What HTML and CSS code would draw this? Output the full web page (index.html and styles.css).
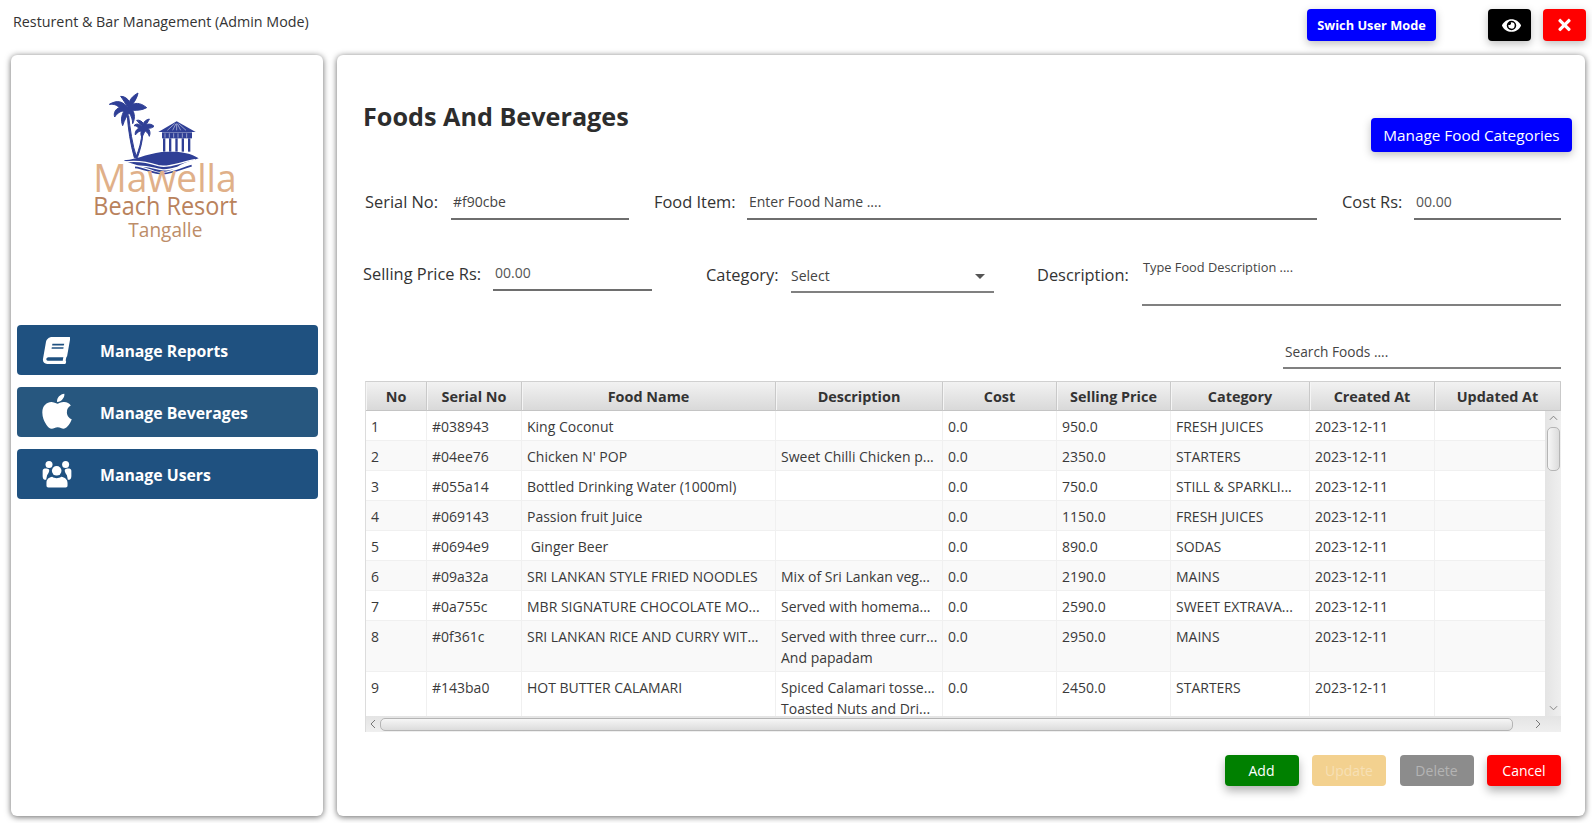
FILE: index.html
```html
<!DOCTYPE html>
<html lang="en">
<head>
  <meta charset="UTF-8" />
  <meta name="viewport" content="width=device-width, initial-scale=1.0" />
  <title>Resturent &amp; Bar Management (Admin Mode)</title>
  <link rel="stylesheet" href="styles.css">
</head>
<body>
  <div class="topbar">
    <div class="app-title">Resturent &amp; Bar Management (Admin Mode)</div>
    <button class="btn btn-mode">Swich User Mode</button>
    <button class="btn btn-icon btn-black">
      <svg class="eye" viewBox="0 0 576 512"><path d="M572.52 241.4C518.29 135.59 410.93 64 288 64S57.68 135.64 3.48 241.41a32.35 32.35 0 0 0 0 29.19C57.71 376.41 165.07 448 288 448s230.32-71.64 284.52-177.41a32.35 32.35 0 0 0 0-29.19zM288 400a144 144 0 1 1 144-144 143.93 143.93 0 0 1-144 144zm0-240a95.31 95.31 0 0 0-25.31 3.79 47.85 47.85 0 0 1-66.9 66.9A95.78 95.78 0 1 0 288 160z"/></svg>
    </button>
    <button class="btn btn-icon btn-red">
      <svg class="cross" viewBox="0 0 352 512"><path d="M242.72 256l100.07-100.07c12.28-12.28 12.28-32.19 0-44.48l-22.24-22.24c-12.28-12.28-32.19-12.28-44.48 0L176 189.28 75.93 89.21c-12.28-12.28-32.19-12.28-44.48 0L9.21 111.45c-12.28 12.28-12.28 32.19 0 44.48L109.28 256 9.21 356.07c-12.28 12.28-12.28 32.19 0 44.48l22.24 22.24c12.28 12.28 32.2 12.28 44.48 0L176 322.72l100.07 100.07c12.28 12.28 32.2 12.28 44.48 0l22.24-22.24c12.28-12.28 12.28-32.19 0-44.48L242.72 256z"/></svg>
    </button>
  </div>

  <div class="main">
    <div class="panel sidebar">
      <svg class="logo" viewBox="0 0 510 480">
        <g class="palms">
          <!-- big palm -->
          <path d="M146 92 C150 130 157 180 170 218 L163 218 C152 180 144 130 142 92 Z"/>
          <path d="M145 70 C128 48 112 44 88 58 C104 56 112 62 118 68 C106 72 100 84 104 96 C112 84 122 78 132 78 C124 92 122 106 128 122 C134 104 140 92 148 84 C154 94 158 104 158 116 C166 100 164 86 158 76 C172 76 186 76 200 68 C186 56 170 52 158 58 C166 46 172 36 174 24 C160 32 152 40 148 50 C142 40 134 34 122 34 C130 44 136 56 145 70 Z"/>
          <!-- small palm -->
          <path d="M189 140 C188 170 180 196 172 218 L168 216 C177 194 185 168 186 140 Z"/>
          <path d="M188 128 C178 116 170 114 162 122 C170 122 174 126 176 130 C168 134 164 142 166 150 C172 142 178 138 184 138 C182 146 182 150 186 156 C190 148 192 144 196 138 C202 142 206 148 208 154 C212 144 210 136 204 130 C212 130 218 128 222 124 C214 116 204 116 198 120 C202 112 206 108 208 102 C198 104 192 110 190 116 C186 108 178 104 170 106 C176 112 182 120 188 128 Z"/>
        </g>
        <g fill="#2f3f96">
          <!-- hut -->
          <path d="M290 109 L347 141 L235 141 Z"/>
          <rect x="246" y="142" width="90" height="18"/>
          <rect x="249" y="160" width="7" height="40"/>
          <rect x="267" y="160" width="7" height="40"/>
          <rect x="286" y="160" width="7" height="40"/>
          <rect x="305" y="160" width="7" height="40"/>
          <rect x="324" y="160" width="7" height="40"/>
          <!-- island and water -->
          <path d="M131 226 C180 222 215 198 270 200 C305 200 335 205 356 220 C340 226 320 230 300 240 C280 256 250 266 225 258 C195 246 160 240 131 226 Z"/>
        </g>
        <g fill="none" stroke="#fff" stroke-width="4">
          <path d="M135 231 C170 226 205 232 235 242 C265 250 300 232 345 224"/>
          <path d="M170 244 C195 240 220 250 245 254 C270 258 295 244 325 240"/>
          <path d="M255 145 V158 M268 145 V158 M281 145 V158 M294 145 V158 M307 145 V158 M320 145 V158" stroke-width="1.5"/>
          <path d="M262 136 L284 116 M278 136 L288 116 M290 136 V116 M302 136 L292 116 M318 136 L296 116" stroke-width="1.5"/>
        </g>
        <path class="wave" d="M165 247 C195 250 222 268 250 266 C280 264 300 252 335 242"/>
        <text class="logo-a" x="40" y="321" textLength="430" lengthAdjust="spacingAndGlyphs">Mawella</text>
        <text class="logo-b" x="40" y="390" textLength="432" lengthAdjust="spacingAndGlyphs">Beach Resort</text>
        <text class="logo-c" x="145" y="456" textLength="222" lengthAdjust="spacingAndGlyphs">Tangalle</text>
      </svg>

      <div class="nav">
        <a class="nav-item">
          <span class="nav-icon">
            <svg class="ic-book" viewBox="-40 0 530 512"><path transform="skewX(-10) translate(80 0)" d="M448 360V24c0-13.3-10.7-24-24-24H96C43 0 0 43 0 96v320c0 53 43 96 96 96h328c13.3 0 24-10.7 24-24v-16c0-7.5-3.5-14.3-8.9-18.7-4.2-15.4-4.2-59.3 0-74.7 5.4-4.3 8.9-11.1 8.9-18.6zM128 134c0-3.3 2.7-6 6-6h212c3.3 0 6 2.7 6 6v20c0 3.3-2.7 6-6 6H134c-3.3 0-6-2.7-6-6v-20zm0 64c0-3.3 2.7-6 6-6h212c3.3 0 6 2.7 6 6v20c0 3.3-2.7 6-6 6H134c-3.3 0-6-2.7-6-6v-20zm253.4 250H96c-17.7 0-32-14.3-32-32 0-17.6 14.4-32 32-32h285.4c-1.9 17.1-1.9 46.9 0 64z"/></svg>
          </span>
          <span>Manage Reports</span>
        </a>
        <a class="nav-item nav-hover">
          <span class="nav-icon">
            <svg class="ic-apple" viewBox="0 24 384 460" preserveAspectRatio="none"><path d="M318.7 268.7c-.2-36.7 16.4-64.4 50-84.8-18.8-26.9-47.2-41.7-84.7-44.6-35.5-2.8-74.3 20.7-88.5 20.7-15 0-49.4-19.7-76.4-19.7C63.3 141.2 4 184.8 4 273.5q0 39.3 14.4 81.2c12.8 36.7 59 126.7 107.2 125.2 25.2-.6 43-17.9 75.8-17.9 31.8 0 48.3 17.9 76.4 17.9 48.6-.7 90.4-82.5 102.6-119.3-65.2-30.7-61.7-90-61.7-91.9zm-56.6-164.2c27.3-32.4 24.8-61.9 24-72.5-24.1 1.4-52 16.4-67.9 34.9-17.5 19.8-27.8 44.3-25.6 71.9 26.1 2 49.9-11.4 69.5-34.3z"/></svg>
          </span>
          <span>Manage Beverages</span>
        </a>
        <a class="nav-item">
          <span class="nav-icon">
            <svg class="ic-users" viewBox="124 448 94 88">
              <circle cx="146" cy="462" r="11"/>
              <circle cx="198" cy="462" r="11"/>
              <path d="M126 482 C126 475 135 474 143 476 C150 478 146 486 140 496 L137 510 L132 510 C128 508 126 504 126 498 Z"/>
              <path d="M216 482 C216 475 207 474 199 476 C192 478 196 486 202 496 L205 510 L210 510 C214 508 216 504 216 498 Z"/>
              <circle cx="170" cy="482" r="15"/>
              <path d="M138 520 C138 508 146 503 156 501 C164 507 176 507 184 501 C196 503 204 510 204 520 L204 528 C204 532 202 534 198 534 L144 534 C140 534 138 532 138 528 Z"/>
            </svg>
          </span>
          <span>Manage Users</span>
        </a>
      </div>
    </div>

    <div class="panel content">
      <div class="head">
        <h1>Foods And Beverages</h1>
        <button class="btn btn-cats">Manage Food Categories</button>
      </div>

      <div class="form-row row-one">
        <label class="lbl">Serial No:</label>
        <div class="field">#f90cbe</div>
        <span></span>
        <label class="lbl">Food Item:</label>
        <div class="field">Enter Food Name ....</div>
        <span></span>
        <label class="lbl">Cost Rs:</label>
        <div class="field hint">00.00</div>
      </div>

      <div class="form-row row-two">
        <label class="lbl lbl-price">Selling Price Rs:</label>
        <div class="field field-price hint">00.00</div>
        <span></span>
        <label class="lbl lbl-low">Category:</label>
        <div class="field field-select">Select<i class="caret"></i></div>
        <span></span>
        <label class="lbl lbl-low">Description:</label>
        <div class="field field-area">Type Food Description ....</div>
      </div>

      <div class="search-row">
        <div class="field field-search">Search Foods ....</div>
      </div>

      <div class="table-wrap">
        <table class="foods">
          <colgroup>
            <col class="c-no"><col class="c-serial"><col class="c-name"><col class="c-desc"><col class="c-cost">
            <col class="c-sell"><col class="c-cat"><col class="c-made"><col class="c-upd">
          </colgroup>
          <thead>
            <tr><th>No</th><th>Serial No</th><th>Food Name</th><th>Description</th><th>Cost</th><th>Selling Price</th><th>Category</th><th>Created At</th><th>Updated At</th></tr>
          </thead>
          <tbody>
            <tr><td>1</td><td>#038943</td><td>King Coconut</td><td></td><td>0.0</td><td>950.0</td><td>FRESH JUICES</td><td>2023-12-11</td><td></td></tr>
            <tr><td>2</td><td>#04ee76</td><td>Chicken N' POP</td><td>Sweet Chilli Chicken p...</td><td>0.0</td><td>2350.0</td><td>STARTERS</td><td>2023-12-11</td><td></td></tr>
            <tr><td>3</td><td>#055a14</td><td>Bottled Drinking Water (1000ml)</td><td></td><td>0.0</td><td>750.0</td><td>STILL &amp; SPARKLI...</td><td>2023-12-11</td><td></td></tr>
            <tr><td>4</td><td>#069143</td><td>Passion fruit Juice</td><td></td><td>0.0</td><td>1150.0</td><td>FRESH JUICES</td><td>2023-12-11</td><td></td></tr>
            <tr><td>5</td><td>#0694e9</td><td>&nbsp;Ginger Beer</td><td></td><td>0.0</td><td>890.0</td><td>SODAS</td><td>2023-12-11</td><td></td></tr>
            <tr><td>6</td><td>#09a32a</td><td>SRI LANKAN STYLE FRIED NOODLES</td><td>Mix of Sri Lankan veg...</td><td>0.0</td><td>2190.0</td><td>MAINS</td><td>2023-12-11</td><td></td></tr>
            <tr><td>7</td><td>#0a755c</td><td>MBR SIGNATURE CHOCOLATE MO...</td><td>Served with homema...</td><td>0.0</td><td>2590.0</td><td>SWEET EXTRAVA...</td><td>2023-12-11</td><td></td></tr>
            <tr class="tall"><td>8</td><td>#0f361c</td><td>SRI LANKAN RICE AND CURRY WIT...</td><td>Served with three curr...<br>And papadam</td><td>0.0</td><td>2950.0</td><td>MAINS</td><td>2023-12-11</td><td></td></tr>
            <tr class="tall"><td>9</td><td>#143ba0</td><td>HOT BUTTER CALAMARI</td><td>Spiced Calamari tosse...<br>Toasted Nuts and Dri...</td><td>0.0</td><td>2450.0</td><td>STARTERS</td><td>2023-12-11</td><td></td></tr>
          </tbody>
        </table>

        <div class="vbar">
          <svg class="arrow" viewBox="0 0 10 6"><path d="M1 5 L5 1 L9 5"/></svg>
          <div class="vthumb"></div>
          <svg class="arrow arrow-end" viewBox="0 0 10 6"><path d="M1 1 L5 5 L9 1"/></svg>
        </div>
        <div class="hbar">
          <svg class="arrow-h" viewBox="0 0 6 10"><path d="M5 1 L1 5 L5 9"/></svg>
          <div class="hthumb"></div>
          <svg class="arrow-h" viewBox="0 0 6 10"><path d="M1 1 L5 5 L1 9"/></svg>
        </div>
      </div>

      <div class="actions">
        <button class="btn act btn-add">Add</button>
        <button class="btn act btn-update">Update</button>
        <button class="btn act btn-delete">Delete</button>
        <button class="btn act btn-cancel">Cancel</button>
      </div>
    </div>
  </div>
</body>
</html>
```

FILE: styles.css
```css
* {
  box-sizing: border-box;
}
body {
  margin: 0;
  height: 823px;
  overflow: hidden;
  background: #fff;
  color: #333;
  font-family: "Open Sans", "Noto Sans", sans-serif;
}

/* top bar */
.topbar {
  height: 55px;
  display: flex;
  align-items: flex-start;
  padding: 9px 6px 0 13px;
}
.app-title {
  flex: 1;
  font-size: 14.3px;
  line-height: 25px;
}
.btn {
  border: none;
  border-radius: 4px;
  color: #fff;
  font-family: inherit;
  cursor: pointer;
  padding: 0;
  box-shadow: 0 3px 8px rgba(0,0,0,0.25);
}
.btn-mode {
  width: 129px;
  height: 32px;
  margin-right: 52px;
  background: #0000ff;
  font-size: 12.8px;
  font-weight: 700;
}
.btn-icon {
  width: 43px;
  height: 32px;
  display: flex;
  align-items: center;
  justify-content: center;
}
.btn-black {
  background: #000;
  margin-right: 12px;
}
.btn-red {
  background: #ff0000;
}
.eye {
  width: 19px;
  height: 17px;
  margin-left: 3px;
  fill: #fff;
}
.cross {
  width: 13px;
  height: 18px;
  fill: #fff;
}

/* panels */
.main {
  display: flex;
  gap: 14px;
  padding: 0 7px 0 11px;
}
.panel {
  height: 761px;
  background: #fff;
  border-radius: 6px;
  box-shadow: 0 1px 6px rgba(0,0,0,0.6);
}
.sidebar {
  width: 312px;
  flex: none;
  padding: 30px 5px 0 6px;
}
.logo {
  display: block;
  width: 170px;
  height: 160px;
  margin: 0 0 0 63px;
  overflow: visible;
}
.palms {
  fill: #2f3f96;
  stroke: #2f3f96;
  stroke-width: 3;
}
.wave {
  fill: none;
  stroke: #2f3f96;
  stroke-width: 5;
}
.logo-a {
  font-size: 113px;
  fill: #e0b089;
}
.logo-b {
  font-size: 74px;
  font-weight: 500;
  fill: #b9825c;
}
.logo-c {
  font-size: 60px;
  font-weight: 500;
  fill: #bd8d69;
}
.nav {
  display: flex;
  flex-direction: column;
  gap: 12px;
  margin-top: 80px;
}
.nav-item {
  height: 50px;
  display: flex;
  align-items: center;
  padding-left: 25px;
  background: #1f5180;
  border-radius: 4px;
  color: #fff;
  font-size: 15.8px;
  font-weight: 700;
}
.nav-item > span:last-child {
  padding-top: 2px;
}
.nav-hover {
  background: #27577f;
}
.nav-icon {
  width: 30px;
  margin-right: 28px;
  display: flex;
  justify-content: center;
}
.nav-icon svg {
  display: block;
  fill: #fff;
}
.ic-book {
  width: 31px;
  height: 27px;
  margin-left: -6px;
}
.ic-apple {
  width: 30px;
  height: 36px;
  margin-top: -3px;
}
.ic-users {
  width: 32px;
  height: 30px;
}

/* content */
.content {
  width: 1248px;
  padding: 0 24px 0 28px;
}
.head {
  height: 110px;
  display: flex;
  justify-content: space-between;
  align-items: flex-start;
  margin-right: -11px;
}
h1 {
  margin: 42px 0 0 -2px;
  font-size: 25.2px;
  line-height: 38px;
  font-weight: 700;
  color: #2d2d2d;
}
.btn-cats {
  width: 201px;
  height: 34px;
  margin-top: 63px;
  background: #0000ff;
  font-size: 15.3px;
}

/* form */
.form-row {
  display: grid;
  align-items: start;
}
.row-one {
  grid-template-columns: 86px 178px 25px 93px 570px 25px 72px 147px;
  margin-top: 20px;
}
.row-two {
  grid-template-columns: 128px 159px 54px 85px 203px 43px 105px 419px;
  margin-top: 35px;
}
.lbl {
  font-size: 16.4px;
  line-height: 34px;
  white-space: nowrap;
}
.lbl-price {
  margin-left: -2px;
  padding-top: 2px;
}
.lbl-low {
  padding-top: 3px;
}
.field {
  height: 35px;
  padding: 7px 0 0 2px;
  border-bottom: 2px solid #6e6e6e;
  font-size: 14px;
  line-height: 20px;
  color: #444;
  white-space: nowrap;
}
.hint {
  color: #555;
}
.field-price {
  height: 36px;
  padding-top: 8px;
}
.field-select {
  height: 38px;
  display: flex;
  justify-content: space-between;
  padding: 11px 9px 0 0;
  border-bottom-color: #808080;
}
.caret {
  width: 0;
  height: 0;
  margin-top: 8px;
  border-left: 5px solid transparent;
  border-right: 5px solid transparent;
  border-top: 5px solid #555;
}
.field-area {
  height: 51px;
  padding: 2px 0 0 1px;
  border-bottom-color: #808080;
  font-size: 12.8px;
}
.search-row {
  display: flex;
  justify-content: flex-end;
  margin-top: 28px;
}
.field-search {
  width: 278px;
  padding-top: 8px;
  border-bottom-color: #808080;
  font-size: 13.7px;
}

/* table */
.table-wrap {
  position: relative;
  height: 351px;
  margin-top: 12px;
  overflow: hidden;
  border-top: 1px solid #d0d0d0;
  border-left: 1px solid #dcdcdc;
}
.foods {
  width: 1195px;
  table-layout: fixed;
  border-collapse: separate;
  border-spacing: 0;
  font-size: 14px;
}
.c-no { width: 61px; }
.c-serial { width: 95px; }
.c-name { width: 254px; }
.c-desc { width: 167px; }
.c-cost { width: 114px; }
.c-sell { width: 114px; }
.c-cat { width: 139px; }
.c-made { width: 125px; }
.c-upd { width: 126px; }
.foods th {
  height: 29px;
  padding: 1px 0 0;
  font-size: 14.4px;
  font-weight: 700;
  color: #333;
  background: linear-gradient(#f2f2f2, #d9d9d9);
  border-right: 1px solid #c9c9c9;
  border-bottom: 1px solid #c4c4c4;
  box-shadow: inset 1px 0 0 #f5f5f5;
}
.foods td {
  height: 30px;
  padding: 5px 0 3px 5px;
  line-height: 21px;
  vertical-align: top;
  white-space: nowrap;
  overflow: hidden;
  color: #3a3a3a;
  border-right: 1px solid #f0f0f0;
  border-bottom: 1px solid #f0f0f0;
}
.foods tbody tr:nth-child(even) td {
  background: #f9f9f9;
}
.foods tr.tall td {
  height: 50px;
}

/* scroll bars */
.vbar {
  position: absolute;
  top: 29px;
  right: 0;
  bottom: 16px;
  width: 16px;
  display: flex;
  flex-direction: column;
  align-items: center;
  background: linear-gradient(to right, #e4e4e4, #efefef);
}
.arrow {
  width: 9px;
  height: 6px;
  margin-top: 4px;
  flex: none;
}
.arrow-end {
  margin-top: auto;
  margin-bottom: 5px;
}
.arrow path, .arrow-h path {
  fill: none;
  stroke: #777;
  stroke-width: 1;
}
.vthumb {
  width: 13px;
  height: 44px;
  margin-top: 6px;
  border: 1px solid #b5b5b5;
  border-radius: 5px;
  background: linear-gradient(to right, #f6f6f6, #dcdcdc);
}
.hbar {
  position: absolute;
  left: 0;
  right: 0;
  bottom: 0;
  height: 16px;
  display: flex;
  align-items: center;
  padding: 0 20px 0 4px;
  background: linear-gradient(#e4e4e4, #efefef);
}
.arrow-h {
  width: 6px;
  height: 10px;
  flex: none;
}
.hthumb {
  width: 1133px;
  height: 13px;
  margin: 0 22px 0 4px;
  border: 1px solid #b5b5b5;
  border-radius: 5px;
  background: linear-gradient(#f6f6f6, #dcdcdc);
}

/* bottom buttons */
.actions {
  display: flex;
  justify-content: flex-end;
  gap: 13.5px;
  margin-top: 23px;
}
.act {
  width: 74px;
  height: 31px;
  font-size: 14px;
  box-shadow: 0 5px 10px rgba(0,0,0,0.3);
}
.btn-add { background: #008000; }
.btn-update { background: #f3d18f; color: #f7e0b5; box-shadow: none; }
.btn-delete { background: #8c8c8c; color: #b4b4b4; box-shadow: none; }
.btn-cancel { background: #ff0000; }
```
